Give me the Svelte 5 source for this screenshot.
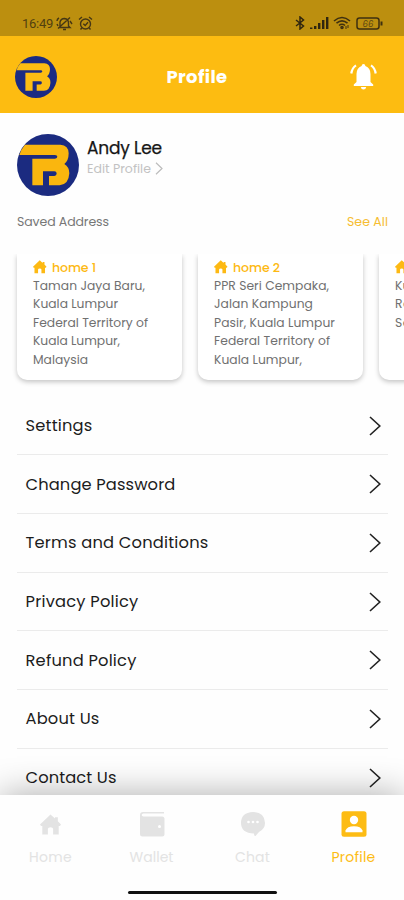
<script>
  const cards = [
    { name: 'home 1', nw: 44, lines: [['Taman Jaya Baru,', 112], ['Kuala Lumpur', 85], ['Federal Territory of', 115], ['Kuala Lumpur,', 87], ['Malaysia', 55]] },
    { name: 'home 2', nw: 47, lines: [['PPR Seri Cempaka,', 115], ['Jalan Kampung', 99], ['Pasir, Kuala Lumpur', 121], ['Federal Territory of', 116], ['Kuala Lumpur,', 88]] },
    { name: 'home 3', nw: 47, lines: [['Kuala Lumpur,', 88], ['Residensi', 62], ['Selangor', 60]] }
  ];
  const rows = [
    ['Settings', 67], ['Change Password', 150], ['Terms and Conditions', 183], ['Privacy Policy', 113],
    ['Refund Policy', 111], ['About Us', 74], ['Contact Us', 91]
  ];
  const tabs = [['Home', 43], ['Wallet', 44], ['Chat', 35], ['Profile', 44]];

  // Tracks a label so that it spans the given width.
  function fit(node, width) {
    const natural = node.getBoundingClientRect().width;
    node.style.letterSpacing = (width - natural) / node.textContent.length + 'px';
  }
</script>

{#snippet logo(size, bg, fg)}
  <svg width={size} height={size} viewBox="8 8 186 186">
    <circle cx="101" cy="101" r="93" fill={bg} />
    <path fill={fg} d="M32 40H138Q163 42 163 66Q163 88 150 98Q165 107 165 126Q163 160 136 162H104V134H120Q127 133 127 126.500Q127 120 120 120H86V162H54V82H122Q129 81 129 76Q129 71 122 71H15Q20 54 32 40Z" />
  </svg>
{/snippet}

{#snippet house(size)}
  <svg width={size} height={size} viewBox="0 0 20 20" fill="currentColor"><path d="M10 .5 14.3 4.300V3H17V6.800L20 10 19 11.500H17.800V19.500H12.500V14Q12.300 12.500 10 12.500T7.500 14V19.500H2.200V11.500H1L0 10Z" /></svg>
{/snippet}

<div class="screen">
  <div class="status">
    <div class="grp">
      <span class="time"><span use:fit={31}>16:49</span></span>
      <svg class="mute" width="17" height="15" viewBox="0 0 17 15" fill="none" stroke="#463714" stroke-width="1.4"><path d="M4 11.5V6Q5 2.5 8.5 2.5 12.5 3 12.5 7V10L14 11.5H3M7 13.5H10M2 12.5 14 1.5M1 5Q1 3 3 2M14 5 16 8M1 8 2 10" /></svg>
      <svg class="alarm" width="15" height="15" viewBox="0 0 15 15" fill="none" stroke="#463714" stroke-width="1.4"><circle cx="7.5" cy="8" r="5" /><path d="M1 3.5 4 1M11 1 14 3.5M5.3 7.7 7.2 9.4 10 6.3M3.8 12 2.5 13.5M11.2 12 12.5 13.5" /></svg>
    </div>
    <div class="grp right">
      <svg width="10" height="14" viewBox="0 0 10 14" fill="none" stroke="#30260f" stroke-width="1.5"><path d="M1 4 8.5 10 5 13V1L8.5 4 1 10" /></svg>
      <svg class="sig" width="19" height="12" viewBox="0 0 19 12" fill="#30260f"><path d="M0 10.500H2.400V12H0ZM4 9H6.400V12H4ZM8 6H10.400V12H8ZM12 3H14.400V12H12ZM16 0H18.400V12H16Z" /></svg>
      <svg class="wifi" width="18" height="14" viewBox="0 0 18 14" fill="none" stroke="#3e3010" stroke-width="1.6"><path d="M1 5Q9-2 17 5M3.5 7.2Q9 2.5 14.5 7.2M6 9.5Q9 7 12 9.5" /><circle cx="9" cy="11.5" r="1" /><path d="M13 10V13M15 9V12" stroke-width="1" /></svg>
      <svg class="bat" width="27" height="13" viewBox="0 0 27 13" fill="none" stroke="#3e3010" stroke-width="1.5"><rect x="1" y="1" width="22" height="11" rx="2.5" /><path d="M25.5 4.5V8.5" stroke-width="2" /><text x="12" y="9.5" text-anchor="middle" font-size="8.5" font-style="italic" stroke="none" fill="#5a4613">66</text></svg>
    </div>
  </div>

  <header>
    {@render logo(42, '#1b2b83', '#fdbd12')}
    <h1><span use:fit={61}>Profile</span></h1>
    <svg class="bell" width="27" height="27" viewBox="0 0 27 27" fill="#fff"><path d="M13.5 1Q15.2 1 15.4 3 20.5 5 20.5 11V19L23.2 21.5V23H3.8V21.5L6.5 19V11Q6.5 5 11.6 3 11.8 1 13.5 1ZM10.8 24H16.2Q15.8 26.5 13.5 26.5T10.8 24Z" /><path d="M1.300 10.500Q2 5 6 2.300M25.700 10.500Q25 5 21 2.300" fill="none" stroke="#fff" stroke-width="2.200" /></svg>
  </header>

  <main>
    <div class="user">
      {@render logo(62, '#1b2b80', '#fab60e')}
      <div class="who">
        <div class="name"><span use:fit={75}>Andy Lee</span></div>
        <div class="edit"><span use:fit={64}>Edit Profile</span><svg width="8" height="13" viewBox="0 0 8 13" fill="none" stroke="#bcbcbc" stroke-width="1.2"><path d="M1 .8 7 6.500 1 12.200" /></svg></div>
      </div>
    </div>
    <div class="saved"><span use:fit={92}>Saved Address</span><span class="all" use:fit={41}>See All</span></div>
    <div class="cards">
      {#each cards as card}
        <div class="card">
          <div class="label">{@render house(13.5)}<span use:fit={card.nw}>{card.name}</span></div>
          {#each card.lines as [text, width]}
            <div class="line"><span use:fit={width}>{text}</span></div>
          {/each}
        </div>
      {/each}
    </div>
    <div class="rows">
      {#each rows as [text, width]}
        <div class="row"><span use:fit={width}>{text}</span><svg width="12" height="20" viewBox="0 0 12 20" fill="none" stroke="#222" stroke-width="1.6"><path d="M1 1 10.8 10 1 19" /></svg></div>
      {/each}
    </div>
  </main>

  <nav>
    <div class="tabs">
      {#each tabs as [text, width], i}
        <div class="tab" class:active={i === 3}>
          <div class="icon">
            {#if i === 0}
              {@render house(21)}
            {:else if i === 1}
              <svg width="26" height="26" viewBox="0 0 26 26" fill="currentColor"><path d="M25 1V2.6H4.5Q2.7 2.7 2.7 4T4.5 5.5H23Q25.5 5.5 25.5 8V23Q25.5 25.5 23 25.5H3.5Q1 25.5 1 23V4Q1 1 4 1Z" /><circle cx="20.5" cy="15.5" r="1.5" fill="#fff" /></svg>
            {:else if i === 2}
              <svg width="26" height="26" viewBox="0 0 26 26"><path fill="currentColor" d="M13 1Q25 1.500 25 12 25 18 19 21L15.500 25Q14 25.500 14 22.500 1 22 1 12 1 1.500 13 1Z" /><g fill="#fff"><circle cx="8.500" cy="11" r="1.300" /><circle cx="13" cy="11" r="1.300" /><circle cx="17.500" cy="11" r="1.300" /></g></svg>
            {:else}
              <svg width="26" height="26" viewBox="0 0 26 26"><rect x=".5" y=".3" width="25" height="25.500" rx="2.500" fill="currentColor" /><circle cx="13" cy="9" r="4.200" fill="#fff" /><path fill="#fff" d="M4.500 21.300V19.500Q6 15.300 13 15.200 20 15.300 21.500 19.500V21.300Z" /></svg>
            {/if}
          </div>
          <div class="tl"><span use:fit={width}>{text}</span></div>
        </div>
      {/each}
    </div>
    <div class="bar"></div>
  </nav>
</div>

<style>
  :global(body) { background: #fff; }
  .screen { width: 404px; height: 900px; overflow: hidden; display: flex; flex-direction: column; background: #fefefe; font-family: Poppins, Inter, "Liberation Sans", sans-serif; white-space: nowrap; }
  svg { display: block; flex: none; }
  .status { flex: none; height: 36px; box-sizing: border-box; padding: 10px 21px 0 22px; background: #bc8f0f; display: flex; justify-content: space-between; }
  .grp { display: flex; align-items: center; height: 26px; }
  .time { width: 34px; font: 13px Roboto, sans-serif; color: #51400f; }
  .alarm { margin-left: 5px; }
  .sig { margin-left: 5px; }
  .wifi { margin-left: 4px; }
  .bat { margin-left: 5px; }
  header { flex: none; height: 77px; box-sizing: border-box; padding: 4px 27px 0 15px; background: #fdbc11; display: flex; align-items: center; justify-content: space-between; }
  h1 { margin: 0 13px 0 0; color: #fff; font-size: 18px; font-weight: 700; }
  main { flex: none; height: 682px; overflow: hidden; }
  .user { display: flex; padding: 21px 0 0 16.5px; gap: 8.5px; }
  .who { padding-top: 2.5px; }
  .name { height: 22px; line-height: 22px; font-size: 17px; color: #161616; font-weight: 400; -webkit-text-stroke: .25px #161616; }
  .edit { height: 20px; line-height: 20px; font-size: 12.5px; color: #c2c2c2; display: flex; align-items: center; gap: 4px; }
  .saved { padding: 16px 16px 0 17px; height: 20px; line-height: 20px; display: flex; justify-content: space-between; font-size: 12.5px; color: #777; }
  .all { color: #f6bd32; }
  .cards { height: 146px; margin-top: 22px; overflow: hidden; display: flex; gap: 16px; padding-left: 17px; }
  .card { flex: none; width: 165px; height: 126px; box-sizing: border-box; padding: 3.5px 0 0 16px; border-radius: 0 0 10px 10px; background: #fff; box-shadow: 0 2px 5px rgba(0, 0, 0, .23); }
  .label { display: flex; align-items: center; gap: 5.5px; height: 19px; line-height: 19px; font-size: 12.5px; font-weight: 500; color: #fdb913; }
  .line { height: 18.5px; line-height: 18.5px; font-size: 12.3px; color: #707070; }
  .rows { padding: 0 16px 0 17px; margin-top: -3.3px; }
  .row { height: 58.7px; box-sizing: border-box; border-bottom: 1.5px solid #ebebeb; display: flex; align-items: center; justify-content: space-between; padding: 0 7px 0 8.5px; font-size: 16.3px; color: #1c1c1c; }
  nav { flex: none; position: relative; height: 105px; background: #fefefe; box-shadow: 0 0 34px rgba(0, 0, 0, .33); }
  .tabs { display: flex; height: 95.5px; }
  .tab { flex: 1; padding-top: 15.5px; display: flex; flex-direction: column; align-items: center; color: #e3e3e3; }
  .icon { height: 27px; display: flex; align-items: center; }
  .tl { margin-top: 8.5px; height: 22px; line-height: 22px; font-size: 14px; }
  .active { color: #fdbc14; }
  .bar { width: 149px; height: 3.5px; margin: 0 auto; border-radius: 2px; background: #111; }
</style>
